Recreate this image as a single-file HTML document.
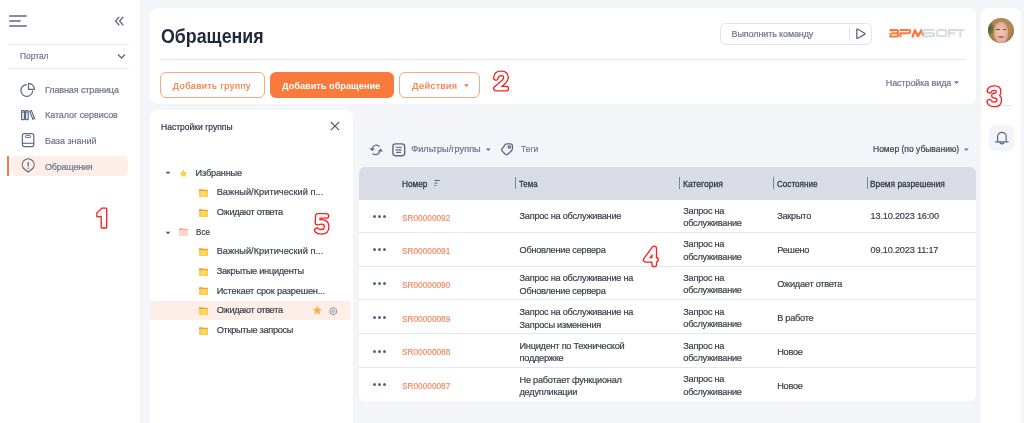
<!DOCTYPE html>
<html><head><meta charset="utf-8">
<style>
*{margin:0;padding:0;box-sizing:border-box}
html{-webkit-font-smoothing:antialiased}
body{will-change:transform;width:1024px;height:423px;overflow:hidden;background:#f4f5f9;font-family:"Liberation Sans",sans-serif;}
.a{position:absolute}
.t{position:absolute;white-space:nowrap;line-height:1;-webkit-text-stroke:0.2px currentColor}
svg{position:absolute;overflow:visible}
.card{position:absolute;background:#fff;border-radius:8px}
.nav{font-size:9px;color:#6b7590}
.tr{font-size:9.2px;color:#3b404c;letter-spacing:-0.1px}
.th{font-size:9.4px;color:#2f3646;letter-spacing:0px;-webkit-text-stroke:0.3px #2f3646;transform-origin:0 0}
.c{font-size:9.2px;color:#3b3f48;letter-spacing:-0.25px}
.sr{font-size:9.2px;color:#f0895e;transform-origin:0 0;transform:scaleX(0.9)}
.sep{position:absolute;left:358px;width:618px;height:1px;background:#e4e6ec}
.dots{position:absolute;left:373px;width:14px;height:3px}
.dots i{position:absolute;top:0.2px;width:3px;height:3px;border-radius:50%;background:#58637d}
.cd{position:absolute;width:1px;height:12px;background:#7c849b;top:177px}
.fold{position:absolute;left:199px;width:9px;height:8px}
.num{position:absolute;font-weight:bold;color:#fff;-webkit-text-stroke:1.3px #ff1f1f;line-height:1}
</style></head><body>
<!-- ============ LEFT SIDEBAR ============ -->
<div class="a" style="left:0;top:0;width:140px;height:423px;background:#fff"></div>
<div class="a" style="left:9px;top:15px;width:17.6px;height:2px;border-radius:1px;background:#858da4"></div>
<div class="a" style="left:9px;top:20px;width:12px;height:2px;border-radius:1px;background:#858da4"></div>
<div class="a" style="left:9px;top:25px;width:17.6px;height:2px;border-radius:1px;background:#858da4"></div>
<svg style="left:114px;top:16px" width="11" height="10" viewBox="0 0 11 10"><path d="M5.2 0.9 L1.6 5.1 L5.2 9.3 M9.2 0.9 L5.6 5.1 L9.2 9.3" fill="none" stroke="#5f6a86" stroke-width="1.4"/></svg>
<div class="a" style="left:8px;top:44px;width:121px;height:1px;background:#e6e8ee"></div>
<div class="t nav" style="left:19.7px;top:52.1px;transform-origin:0 0;transform:scaleX(0.93)">Портал</div>
<svg style="left:117px;top:53px" width="9" height="7" viewBox="0 0 9 7"><path d="M1 1.5 L4.5 5 L8 1.5" fill="none" stroke="#5b6785" stroke-width="1.3"/></svg>
<div class="a" style="left:8px;top:68px;width:121px;height:1px;background:#e6e8ee"></div>

<svg style="left:20px;top:82px" width="16" height="16" viewBox="0 0 16 16"><path d="M6.9 2.6 A5.9 5.9 0 1 0 12.7 8.5" fill="none" stroke="#5b6785" stroke-width="1.2"/><path d="M8.5 1.4 A6 6 0 0 1 14.5 7.4 L8.5 7.4 Z" fill="none" stroke="#5b6785" stroke-width="1.2" stroke-linejoin="round"/></svg>
<div class="t nav" style="left:45px;top:86.2px;letter-spacing:-0.11px">Главная страница</div>
<svg style="left:20px;top:109px" width="16" height="12" viewBox="0 0 16 12"><rect x="1.6" y="1.6" width="2.8" height="9.1" rx="0.5" fill="none" stroke="#5b6785" stroke-width="1.2"/><rect x="5.6" y="1.6" width="2.6" height="9.1" rx="0.5" fill="none" stroke="#5b6785" stroke-width="1.2"/><path d="M1.6 3.2 H4.4 M5.6 3.2 H8.2" stroke="#5b6785" stroke-width="0.8"/><path d="M9.7 2.4 L11.4 1.6 L14.6 9.5 L12.9 10.3 Z" fill="none" stroke="#5b6785" stroke-width="1.15" stroke-linejoin="round"/></svg>
<div class="t nav" style="left:45px;top:111.2px;letter-spacing:-0.07px">Каталог сервисов</div>
<svg style="left:20px;top:131px" width="16" height="17" viewBox="0 0 16 17"><rect x="2.4" y="2.6" width="11.4" height="13" rx="2" fill="none" stroke="#5b6785" stroke-width="1.2"/><rect x="5.4" y="4.6" width="5.3" height="2" rx="1" fill="none" stroke="#5b6785" stroke-width="1"/><path d="M2.4 12.3 H13.8" stroke="#5b6785" stroke-width="1.1"/></svg>
<div class="t nav" style="left:45px;top:137px">База знаний</div>
<div class="a" style="left:11px;top:156px;width:117px;height:19.5px;background:#fdeee8;border-radius:5px"></div>
<div class="a" style="left:7px;top:156px;width:1.6px;height:19.5px;background:#f97a3c"></div>
<svg style="left:20px;top:157px" width="16" height="17" viewBox="0 0 16 17"><path d="M8.2 14.9 L3.4 11.3 A5.95 5.95 0 1 1 13 11.3 Z" fill="none" stroke="#5b6785" stroke-width="1.2" stroke-linejoin="round"/><path d="M8.2 5.1 V9.4" stroke="#5b6785" stroke-width="1.3"/><circle cx="8.2" cy="11.2" r="0.7" fill="#5b6785"/></svg>
<div class="t nav" style="left:45px;top:162.5px;letter-spacing:-0.2px">Обращения</div>

<!-- ============ HEADER CARD ============ -->
<div class="card" style="left:150px;top:8px;width:826px;height:96px"></div>
<div class="t" style="left:161.3px;top:26.5px;font-size:19.8px;font-weight:bold;color:#1f2a3c;-webkit-text-stroke:0;transform:scaleX(0.9);transform-origin:0 0">Обращения</div>
<div class="a" style="left:160px;top:59px;width:806px;height:1px;background:#e3e5ec"></div>
<div class="a" style="left:160px;top:72px;width:105px;height:25.5px;border:1px solid #f9a882;border-radius:6px"></div>
<div class="t" style="left:172.8px;top:81.5px;font-size:9.2px;color:#f47b43;letter-spacing:0.5px">Добавить группу</div>
<div class="a" style="left:269.5px;top:72px;width:124.5px;height:25.5px;background:#f97a3c;border-radius:6px"></div>
<div class="t" style="left:282px;top:81.5px;font-size:9.2px;color:#fff;font-weight:bold;-webkit-text-stroke:0">Добавить обращение</div>
<div class="a" style="left:399px;top:72px;width:81px;height:25.5px;border:1px solid #f9a882;border-radius:6px"></div>
<div class="t" style="left:412.1px;top:81.1px;font-size:9.5px;color:#f47b43;letter-spacing:0.45px">Действия</div>
<svg style="left:463px;top:84px" width="7" height="4" viewBox="0 0 7 4"><path d="M1 0.3 H6 L3.5 3 Z" fill="#f47b43"/></svg>

<div class="a" style="left:720px;top:23.3px;width:151.5px;height:21.3px;border:1px solid #e1e3ea;border-radius:6px"></div>
<div class="t" style="left:731.6px;top:30.1px;font-size:9px;color:#6b7590;letter-spacing:-0.12px">Выполнить команду</div>
<div class="a" style="left:848.5px;top:26px;width:1px;height:15.3px;background:#e1e3ea"></div>
<svg style="left:855px;top:28px" width="12" height="12" viewBox="0 0 12 12"><path d="M1.8 1.9 Q1.6 0.6 2.8 1.3 L9.6 5.2 Q10.6 5.8 9.6 6.4 L2.8 10.3 Q1.6 11 1.8 9.7 Z" fill="none" stroke="#5b6785" stroke-width="1.3" stroke-linejoin="round"/></svg>
<svg style="left:886px;top:26px" width="80" height="14" viewBox="0 0 80 14"><g fill="none" stroke-width="2">
<path d="M3.5 4 H10.6 Q12 4 12 5.6 Q12 7.2 10.6 7.2 H5.2 M10.6 7.2 Q12.1 7.2 12.1 8.8 Q12.1 10.4 10.6 10.4 H4.4 V7.2" stroke="#f97a3c"/>
<path d="M4 5.6 H8.5" stroke="#fcc4a4" stroke-width="1.2"/>
<path d="M14.4 11.3 V7.2 H22.8 Q24.2 7.2 24.2 5.6 Q24.2 4 22.8 4 H13.5" stroke="#f97a3c"/>
<path d="M26.6 10.6 L28.9 4.3 L32 10.1 L35.3 4.3 L37 8.6" stroke="#f97a3c" stroke-width="2.3" stroke-linejoin="round" stroke-linecap="round"/>
<path d="M48.6 4.1 H38.6 Q37 4.1 37 5.6 Q37 7.2 38.6 7.2 H46.6 Q48.2 7.2 48.2 8.8 Q48.2 10.3 46.6 10.3 H36.2" stroke="#d8dbe2"/>
<rect x="51.1" y="4.1" width="9.2" height="6.2" rx="2.2" stroke="#d8dbe2"/>
<path d="M63 11.1 V4.1 H78.5 M63 7.3 H69.2 M74.3 4.1 V11.1" stroke="#d8dbe2"/>
</g></svg>
<div class="t nav" style="left:885.8px;top:78.9px;letter-spacing:-0.1px">Настройка вида</div>
<svg style="left:953px;top:81px" width="7" height="4" viewBox="0 0 7 4"><path d="M1 0.3 H6 L3.5 3 Z" fill="#6b7590"/></svg>

<!-- ============ RIGHT PANEL ============ -->
<div class="card" style="left:981px;top:8px;width:40px;height:430px"></div>
<div class="a" style="left:988.3px;top:17.8px;width:25.6px;height:25.6px;border-radius:50%;overflow:hidden;background:radial-gradient(circle at 50% 45%,#c49a64 0,#b08650 55%,#86603a 100%)">
  <div class="a" style="left:-1px;top:4px;width:7px;height:13px;border-radius:50%;background:radial-gradient(ellipse at 40% 50%,#4a6436 0,#6a7444 45%,rgba(150,120,70,0) 100%);filter:blur(0.6px)"></div>
  <div class="a" style="left:6.2px;top:3.8px;width:13.4px;height:21px;border-radius:48% 48% 45% 45%;background:radial-gradient(ellipse at 50% 50%,#eec6b4 0,#e2b4a0 55%,#cfa07e 85%,rgba(170,120,80,0) 100%);filter:blur(0.7px)"></div>
  <div class="a" style="left:8.2px;top:11px;width:3.4px;height:1.6px;border-radius:50%;background:#5a4440;filter:blur(0.5px)"></div>
  <div class="a" style="left:14.4px;top:11px;width:3.4px;height:1.6px;border-radius:50%;background:#5a4440;filter:blur(0.5px)"></div>
  <div class="a" style="left:10.2px;top:18.3px;width:5.4px;height:1.8px;border-radius:50%;background:#b5666a;filter:blur(0.5px)"></div>
</div>
<div class="a" style="left:999px;top:105px;width:13px;height:1px;background:#e3e5ec"></div>
<div class="a" style="left:989px;top:125px;width:25px;height:25.5px;background:#f4f5f9;border-radius:6px"></div>
<svg style="left:994px;top:131px" width="16" height="14" viewBox="0 0 16 14"><path d="M3.6 10.8 V5.6 A4.3 4.3 0 0 1 12.2 5.6 V10.8 M1.6 10.8 H14.1 M6 10.9 A1.9 1.9 0 0 0 9.8 10.9" fill="none" stroke="#5b6785" stroke-width="1.2" stroke-linecap="round"/></svg>

<!-- ============ GROUP PANEL ============ -->
<div class="card" style="left:150px;top:110px;width:203px;height:330px"></div>
<div class="t" style="left:160.8px;top:122.1px;font-size:9.8px;color:#2b3040;transform-origin:0 0;transform:scaleX(0.87)">Настройки группы</div>
<svg style="left:329px;top:120px" width="12" height="12" viewBox="0 0 12 12"><path d="M1.8 2 L10.1 10.1 M10.1 2 L1.8 10.1" stroke="#55607a" stroke-width="1.25"/></svg>

<svg style="left:165px;top:171px" width="6" height="4" viewBox="0 0 6 4"><path d="M0.6 0.8 H5.4 L3 3.3 Z" fill="#4a5470"/></svg>
<svg style="left:178.5px;top:168.5px" width="9" height="9" viewBox="0 0 24 24"><path d="M12 1.5 L15.2 8.3 L22.6 9.1 L17 14.1 L18.6 21.5 L12 17.7 L5.4 21.5 L7 14.1 L1.4 9.1 L8.8 8.3 Z" fill="#fdcb45"/></svg>
<div class="t tr" style="left:195.6px;top:168.8px;letter-spacing:-0.2px">Избранные</div>

<svg class="fold" style="top:189px" viewBox="0 0 9 8"><rect x="0" y="0.6" width="9" height="7.4" fill="#fdcf4b"/><path d="M0 0.5 H3.6 L4.2 1.1 H9 V1.6 H0 Z" fill="#f36b3a"/><circle cx="4.5" cy="4.7" r="1.3" fill="none" stroke="#fff3c4" stroke-width="0.7"/></svg>
<div class="t tr" style="left:216.7px;top:188.2px;letter-spacing:0.04px">Важный/Критический п...</div>
<svg class="fold" style="top:208.7px" viewBox="0 0 9 8"><rect x="0" y="0.6" width="9" height="7.4" fill="#fdcf4b"/><path d="M0 0.5 H3.6 L4.2 1.1 H9 V1.6 H0 Z" fill="#f36b3a"/><circle cx="4.5" cy="4.7" r="1.3" fill="none" stroke="#fff3c4" stroke-width="0.7"/></svg>
<div class="t tr" style="left:216.7px;top:208.1px;letter-spacing:-0.3px">Ожидают ответа</div>

<svg style="left:165px;top:230.5px" width="6" height="4" viewBox="0 0 6 4"><path d="M0.6 0.8 H5.4 L3 3.3 Z" fill="#4a5470"/></svg>
<svg style="left:178.5px;top:228px" width="9" height="8" viewBox="0 0 9 8"><rect x="0" y="0.6" width="9" height="7.4" fill="#fdd6c8"/><path d="M0 0.5 H3.6 L4.2 1.1 H9 V1.6 H0 Z" fill="#f6845a"/></svg>
<div class="t tr" style="left:196.2px;top:227.7px;letter-spacing:0;transform-origin:0 0;transform:scaleX(0.88)">Все</div>

<svg class="fold" style="top:248px" viewBox="0 0 9 8"><rect x="0" y="0.6" width="9" height="7.4" fill="#fdcf4b"/><path d="M0 0.5 H3.6 L4.2 1.1 H9 V1.6 H0 Z" fill="#f36b3a"/><circle cx="4.5" cy="4.7" r="1.3" fill="none" stroke="#fff3c4" stroke-width="0.7"/></svg>
<div class="t tr" style="left:216.7px;top:247.3px;letter-spacing:0.04px">Важный/Критический п...</div>
<svg class="fold" style="top:267.7px" viewBox="0 0 9 8"><rect x="0" y="0.6" width="9" height="7.4" fill="#fdcf4b"/><path d="M0 0.5 H3.6 L4.2 1.1 H9 V1.6 H0 Z" fill="#f36b3a"/><circle cx="4.5" cy="4.7" r="1.3" fill="none" stroke="#fff3c4" stroke-width="0.7"/></svg>
<div class="t tr" style="left:216.7px;top:267px;letter-spacing:-0.26px">Закрытые инциденты</div>
<svg class="fold" style="top:287.4px" viewBox="0 0 9 8"><rect x="0" y="0.6" width="9" height="7.4" fill="#fdcf4b"/><path d="M0 0.5 H3.6 L4.2 1.1 H9 V1.6 H0 Z" fill="#f36b3a"/><circle cx="4.5" cy="4.7" r="1.3" fill="none" stroke="#fff3c4" stroke-width="0.7"/></svg>
<div class="t tr" style="left:216.7px;top:286.7px;letter-spacing:-0.17px">Истекает срок разрешен...</div>
<div class="a" style="left:150px;top:301.4px;width:200px;height:19px;background:#fdeee8"></div>
<svg class="fold" style="top:307.1px" viewBox="0 0 9 8"><rect x="0" y="0.6" width="9" height="7.4" fill="#fdcf4b"/><path d="M0 0.5 H3.6 L4.2 1.1 H9 V1.6 H0 Z" fill="#f36b3a"/><circle cx="4.5" cy="4.7" r="1.3" fill="none" stroke="#fff3c4" stroke-width="0.7"/></svg>
<div class="t tr" style="left:216.7px;top:306.4px;letter-spacing:-0.3px">Ожидают ответа</div>
<svg style="left:312.2px;top:305px" width="10.6" height="10.6" viewBox="0 0 24 24"><path d="M12 1.5 L15.2 8.3 L22.6 9.1 L17 14.1 L18.6 21.5 L12 17.7 L5.4 21.5 L7 14.1 L1.4 9.1 L8.8 8.3 Z" fill="#fdb146"/></svg>
<svg style="left:329.3px;top:306.5px" width="8.5" height="8.5" viewBox="0 0 8.5 8.5"><path d="M4.25 0.6 L7.4 2.4 V6.1 L4.25 7.9 L1.1 6.1 V2.4 Z" fill="none" stroke="#7d86a0" stroke-width="0.95"/><circle cx="4.25" cy="4.25" r="1.15" fill="none" stroke="#7d86a0" stroke-width="0.85"/></svg>
<svg class="fold" style="top:326.8px" viewBox="0 0 9 8"><rect x="0" y="0.6" width="9" height="7.4" fill="#fdcf4b"/><path d="M0 0.5 H3.6 L4.2 1.1 H9 V1.6 H0 Z" fill="#f36b3a"/><circle cx="4.5" cy="4.7" r="1.3" fill="none" stroke="#fff3c4" stroke-width="0.7"/></svg>
<div class="t tr" style="left:216.7px;top:326.1px;letter-spacing:-0.3px">Открытые запросы</div>

<!-- ============ TOOLBAR ============ -->
<svg style="left:368px;top:142.6px" width="16" height="14" viewBox="0 0 16 14"><path d="M4.2 5.4 A4.3 4.3 0 0 1 11.6 3.6" fill="none" stroke="#5b6785" stroke-width="1.2"/><path d="M1.5 5.3 H6.7 L4.2 8.3 Z" fill="#5b6785"/><path d="M11.8 8.5 A4.3 4.3 0 0 1 4.5 10.3" fill="none" stroke="#5b6785" stroke-width="1.2"/><path d="M9.8 8.5 H15 L12.5 5.5 Z" fill="#5b6785"/></svg>
<svg style="left:391px;top:141.6px" width="15" height="15" viewBox="0 0 15 15"><rect x="1.9" y="1.9" width="11.8" height="11.8" rx="2.6" fill="none" stroke="#5b6785" stroke-width="1.4"/><path d="M4.5 5.3 H11.1 M4.6 7.9 H10.6 M5.1 10.4 H10.1" stroke="#5b6785" stroke-width="1.1"/></svg>
<div class="t" style="left:411.2px;top:145.4px;font-size:9.2px;color:#6b7590">Фильтры/группы</div>
<svg style="left:485px;top:147.8px" width="7" height="4" viewBox="0 0 7 4"><path d="M1 0.4 H5.6 L3.3 3 Z" fill="#5b6785"/></svg>
<svg style="left:500px;top:142.1px" width="15" height="15" viewBox="0 0 15 15"><path d="M6.6 1.9 H10.4 Q12.4 1.9 12.4 3.9 V6.8 Q12.4 7.6 11.8 8.2 L7.8 12.3 Q6.6 13.4 5.4 12.3 L2.2 9.1 Q1.1 7.9 2.2 6.7 L5.2 2.6 Q5.8 1.9 6.6 1.9 Z" fill="none" stroke="#5b6785" stroke-width="1.3" stroke-linejoin="round"/><circle cx="9.3" cy="5.1" r="1.2" fill="none" stroke="#5b6785" stroke-width="1.2"/></svg>
<div class="t" style="left:520.5px;top:145.4px;font-size:9.2px;color:#6b7590;transform-origin:0 0;transform:scaleX(0.92)">Теги</div>
<div class="t" style="left:873.4px;top:144.7px;font-size:9.2px;color:#3b404c;transform-origin:0 0;transform:scaleX(0.925)">Номер (по убыванию)</div>
<svg style="left:963px;top:147.5px" width="7" height="4" viewBox="0 0 7 4"><path d="M1 0.4 H5.6 L3.3 3 Z" fill="#6b7590"/></svg>

<!-- ============ TABLE ============ -->
<div class="a" style="left:358.5px;top:166.7px;width:617.5px;height:33px;background:#d9dce4;border-radius:6px 6px 0 0"></div>
<div class="a" style="left:358.5px;top:199.6px;width:617.5px;height:201px;background:#fff;border-radius:0 0 6px 6px"></div>
<div class="t th" style="left:402.3px;top:178.8px;transform:scaleX(0.88)">Номер</div>
<svg style="left:433.5px;top:180px" width="6" height="6" viewBox="0 0 6 6"><path d="M0.5 0.5 H5.6 M0.5 3.1 H3.4 M0.5 5.5 H2.2" stroke="#55607a" stroke-width="1"/></svg>
<div class="cd" style="left:515.3px"></div>
<div class="t th" style="left:519px;top:178.8px;transform:scaleX(0.84)">Тема</div>
<div class="cd" style="left:679.3px"></div>
<div class="t th" style="left:682.9px;top:178.8px;transform:scaleX(0.91)">Категория</div>
<div class="cd" style="left:773.1px"></div>
<div class="t th" style="left:776.6px;top:178.8px;transform:scaleX(0.865)">Состояние</div>
<div class="cd" style="left:867.2px"></div>
<div class="t th" style="left:870.2px;top:178.8px;transform:scaleX(0.89)">Время разрешения</div>

<div class="sep" style="top:232.3px"></div>
<div class="sep" style="top:265.8px"></div>
<div class="sep" style="top:299.2px"></div>
<div class="sep" style="top:333.2px"></div>
<div class="sep" style="top:366.9px"></div>

<!-- row 1 -->
<div class="dots" style="top:214.7px"><i style="left:0"></i><i style="left:5px"></i><i style="left:10px"></i></div>
<div class="t sr" style="left:402px;top:213.7px">SR00000092</div>
<div class="t c" style="left:519.5px;top:212.3px">Запрос на обслуживание</div>
<div class="t c" style="left:683.3px;top:206.8px">Запрос на</div>
<div class="t c" style="left:683.3px;top:219.2px">обслуживание</div>
<div class="t c" style="left:777.2px;top:212.3px">Закрыто</div>
<div class="t c" style="left:870.6px;top:212.3px;letter-spacing:-0.2px">13.10.2023 16:00</div>
<!-- row 2 -->
<div class="dots" style="top:248.3px"><i style="left:0"></i><i style="left:5px"></i><i style="left:10px"></i></div>
<div class="t sr" style="left:402px;top:247.3px">SR00000091</div>
<div class="t c" style="left:519.5px;top:245.9px">Обновление сервера</div>
<div class="t c" style="left:683.3px;top:240.4px">Запрос на</div>
<div class="t c" style="left:683.3px;top:252.8px">обслуживание</div>
<div class="t c" style="left:777.2px;top:245.9px">Решено</div>
<div class="t c" style="left:870.6px;top:245.9px;letter-spacing:-0.2px">09.10.2023 11:17</div>
<!-- row 3 -->
<div class="dots" style="top:281.9px"><i style="left:0"></i><i style="left:5px"></i><i style="left:10px"></i></div>
<div class="t sr" style="left:402px;top:280.9px">SR00000090</div>
<div class="t c" style="left:519.5px;top:274.1px">Запрос на обслуживание на</div>
<div class="t c" style="left:519.5px;top:286.6px">Обновление сервера</div>
<div class="t c" style="left:683.3px;top:274.0px">Запрос на</div>
<div class="t c" style="left:683.3px;top:286.4px">обслуживание</div>
<div class="t c" style="left:777.2px;top:280.3px">Ожидает ответа</div>
<!-- row 4 -->
<div class="dots" style="top:315.9px"><i style="left:0"></i><i style="left:5px"></i><i style="left:10px"></i></div>
<div class="t sr" style="left:402px;top:314.9px">SR00000089</div>
<div class="t c" style="left:519.5px;top:308.1px">Запрос на обслуживание на</div>
<div class="t c" style="left:519.5px;top:320.6px">Запросы изменения</div>
<div class="t c" style="left:683.3px;top:308.0px">Запрос на</div>
<div class="t c" style="left:683.3px;top:320.4px">обслуживание</div>
<div class="t c" style="left:777.2px;top:314.3px">В работе</div>
<!-- row 5 -->
<div class="dots" style="top:349.4px"><i style="left:0"></i><i style="left:5px"></i><i style="left:10px"></i></div>
<div class="t sr" style="left:402px;top:348.4px">SR00000088</div>
<div class="t c" style="left:519.5px;top:341.6px">Инцидент по Технической</div>
<div class="t c" style="left:519.5px;top:354.1px">поддержке</div>
<div class="t c" style="left:683.3px;top:341.5px">Запрос на</div>
<div class="t c" style="left:683.3px;top:353.9px">обслуживание</div>
<div class="t c" style="left:777.2px;top:347.8px">Новое</div>
<!-- row 6 -->
<div class="dots" style="top:383.3px"><i style="left:0"></i><i style="left:5px"></i><i style="left:10px"></i></div>
<div class="t sr" style="left:402px;top:382.3px">SR00000087</div>
<div class="t c" style="left:519.5px;top:375.5px">Не работает функционал</div>
<div class="t c" style="left:519.5px;top:388.0px">дедупликации</div>
<div class="t c" style="left:683.3px;top:375.4px">Запрос на</div>
<div class="t c" style="left:683.3px;top:387.8px">обслуживание</div>
<div class="t c" style="left:777.2px;top:381.7px">Новое</div>
<svg style="left:0;top:0" width="1024" height="423" viewBox="0 0 1024 423">
<g fill="none" stroke-linejoin="round" stroke-linecap="round">
<path d="M101.8 208.2 H106 Q106.7 208.2 106.7 208.9 V227.3 Q106.7 228 106 228 H101.9 Q101.2 228 101.2 227.3 V216.3 L97.5 216.8 Q96.8 216.9 96.8 216.2 V213.4 Q96.8 212.7 97.4 212.4 Z" fill="#fff" stroke="#ff1c1c" stroke-width="1.3"/>
<path d="M495.9 77.8 Q496.3 73.4 501 73.4 Q506 73.4 506 77.5 Q506 80 502.5 83 L496 88.6 H506.2" stroke="#ff1c1c" stroke-width="5.9"/>
<path d="M495.9 77.8 Q496.3 73.4 501 73.4 Q506 73.4 506 77.5 Q506 80 502.5 83 L496 88.6 H506.2" stroke="#fff" stroke-width="3.3"/>
<path d="M989.5 90.6 Q990.8 88.1 994.3 88.1 Q998.6 88.1 998.6 91.5 Q998.6 95.3 994 95.6 Q999.2 95.8 999.2 100 Q999.2 104.4 994.3 104.4 Q990.5 104.4 989.4 101.8" stroke="#ff1c1c" stroke-width="5.9"/>
<path d="M989.5 90.6 Q990.8 88.1 994.3 88.1 Q998.6 88.1 998.6 91.5 Q998.6 95.3 994 95.6 Q999.2 95.8 999.2 100 Q999.2 104.4 994.3 104.4 Q990.5 104.4 989.4 101.8" stroke="#fff" stroke-width="3.3"/>
<path d="M654.2 264.4 V248.5 L645.8 259.8 H656" stroke="#ff1c1c" stroke-width="5.9"/>
<path d="M654.2 264.4 V248.5 L645.8 259.8 H656" stroke="#fff" stroke-width="3.3"/>
<path d="M326.4 215.9 H317.9 L317.5 222.6 Q319.2 221.9 321.8 221.9 Q326.6 221.9 326.6 226.8 Q326.6 231.8 321.5 231.8 Q318.2 231.8 316.9 230.4" stroke="#ff1c1c" stroke-width="5.9"/>
<path d="M326.4 215.9 H317.9 L317.5 222.6 Q319.2 221.9 321.8 221.9 Q326.6 221.9 326.6 226.8 Q326.6 231.8 321.5 231.8 Q318.2 231.8 316.9 230.4" stroke="#fff" stroke-width="3.3"/>
</g></svg>
</body></html>
